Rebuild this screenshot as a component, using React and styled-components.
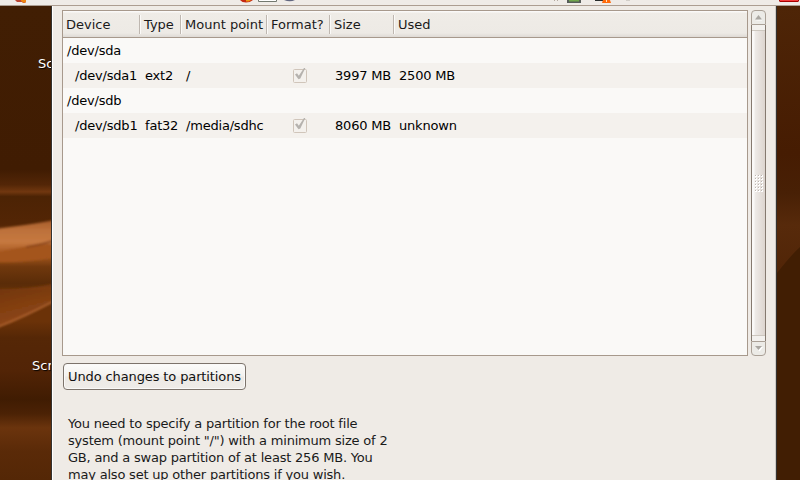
import React from "react";
import styled, { createGlobalStyle } from "styled-components";

const GlobalStyle = createGlobalStyle`
  * { box-sizing: border-box; }
  body {
    margin: 0;
    overflow: hidden;
    font: 13px/17px "DejaVu Sans", sans-serif;
    color: #1a1a1a;
    background: #411e03;
  }
`;

const Screen = styled.div`
  width: 800px;
  height: 480px;
  overflow: hidden;
  display: flex;
  flex-direction: column;
`;

const TopPanel = styled.header`
  height: 6px;
  flex: none;
  background: #efebe7;
  border-bottom: 1px solid #ac9d91;
  svg { display: block; }
`;

const Desktop = styled.main`
  flex: 1;
  min-height: 0;
  display: grid;
  grid-template-columns: 51px 726px 23px;
`;

const Wallpaper = styled.div`
  position: relative;
  overflow: hidden;
  svg { display: block; }
`;

const IconLabel = styled.span`
  position: absolute;
  left: ${(p) => p.$x}px;
  top: ${(p) => p.$y}px;
  color: #fff;
  text-shadow: 1px 1px 1px #000;
`;

const Window = styled.section`
  background: #efebe6;
  border-left: 1px solid #343230;
  border-right: 1px solid #343230;
  box-shadow: inset 1px 0 #fff, inset -1px 0 #cfcac4;
  padding: 4px 9px 0 10px;
  overflow: hidden;
`;

const ScrollArea = styled.div`
  display: flex;
  gap: 3px;
  height: 346px;
`;

const Table = styled.div`
  width: 686px;
  border: 1px solid #a7998c;
  background: #faf9f7;
`;

const Line = styled.div`
  display: grid;
  grid-template-columns: 78px 41px 86px 63px 64px 1fr;
`;

const HeaderRow = styled(Line)`
  height: 27px;
  padding: 4px 0 3px;
  background: linear-gradient(#faf9f8 0 1px, #efece7 2px, #edeae5 22px, #dedad5 26px);
  border-bottom: 1px solid #a7998c;
`;

const HeaderCell = styled.div`
  height: 19px;
  padding: 1px 0 0 3px;
  white-space: nowrap;
  border-right: ${(p) => (p.$last ? "0" : "1px solid #fbfaf8")};
  box-shadow: ${(p) => (p.$last ? "none" : "inset -1px 0 #beb7b0")};
`;

const Row = styled(Line)`
  height: 25px;
  background: ${(p) => (p.$shaded ? "#f4f1ed" : "#faf9f7")};
  color: #000;
  letter-spacing: -0.2px;
`;

const Cell = styled.div`
  padding: 4px 0 0 ${(p) => (p.$child ? 12 : 4)}px;
  white-space: nowrap;
`;

const CheckCell = styled.div`
  padding: 3px 0 0 24px;
  svg { display: block; }
`;

const Scrollbar = styled.div`
  width: 15px;
  display: flex;
  flex-direction: column;
`;

const StepButton = styled.div`
  height: 15px;
  border: 1px solid #aaa096;
  border-radius: ${(p) => (p.$down ? "0 0 4px 4px" : "4px 4px 0 0")};
  background: #ecebe7;
  display: grid;
  place-items: center;
`;

const Track = styled.div`
  flex: 1;
  padding: 5px 0;
  border: solid #857a70;
  border-width: 0 1px;
  background: #f3f1ee;
`;

const Thumb = styled.div`
  height: 306px;
  padding: 2px 0 0 2px;
  border: solid #cdc7bf;
  border-width: 1px 0;
  background: linear-gradient(90deg, #faf9f8 0 2px, #eeebe8 3px, #ddd5cf);
  display: grid;
  place-items: center;
`;

const Button = styled.button`
  display: block;
  margin: 7px 0 0 1px;
  width: 183px;
  height: 27px;
  padding: 0 0 1px;
  border: 1px solid #7c736b;
  border-radius: 4px;
  background: linear-gradient(#fcfcfb, #f3f1ee 48%, #ece9e5 52%, #efece8);
  box-shadow: inset 0 0 0 1px #faf9f8;
  font: inherit;
  letter-spacing: -0.12px;
  color: #111;
  white-space: nowrap;
`;

const Notice = styled.p`
  margin: 25px 0 0 6px;
  letter-spacing: -0.2px;
  white-space: pre;
`;

function PanelIcons() {
  return (
    <svg width="800" height="5">
      <path d="M15 0h8l3 3h-3l-1-1h-5z" fill="#bd4632" />
      <path d="M21 0h5v2l-2 1-3-2z" fill="#ef8510" />
      <path d="M240 0h13q-3 2.500-7 2.500T240 0z" fill="#c42712" />
      <path d="M246 0h5l-2 1.500h-3z" fill="#ed9615" />
      <path d="M258.500 0v1.500h18V0" fill="#fff" stroke="#737970" />
      <path d="M284 0h11q-5 2.500-11 0z" fill="#626780" />
      <path d="M554 0h1v1h-1zm3 0h1v1h-1z" fill="#b5aaa0" />
      <path d="M567 0h14v3h-14z" fill="#565c59" />
      <path d="M569 0h10v1.500h-10z" fill="#70a64d" />
      <path d="M595 0h9v1h-9z" fill="#272b2b" />
      <path d="M603 0h7l1 3h-9z" fill="#ff6a0a" />
      <path d="M606 0h1v2h-1z" fill="#ffe1c0" />
      <path d="M626 0h4v1h-4z" fill="#d2cec8" />
      <path d="M779 0h20v1l-1 1h-18l-1-1z" fill="#a80000" />
      <path d="M780 0h18v1h-18z" fill="#f33b3b" />
    </svg>
  );
}

function LeftScene() {
  return (
    <svg width="51" height="474" viewBox="0 6 51 474">
      <defs>
        <linearGradient id="base" gradientUnits="userSpaceOnUse" x1="0" y1="6" x2="0" y2="480">
          <stop offset="0" stopColor="#411e03" />
          <stop offset=".345" stopColor="#401c02" />
          <stop offset=".377" stopColor="#532607" />
          <stop offset=".392" stopColor="#71370f" />
          <stop offset=".402" stopColor="#4c2304" />
          <stop offset=".46" stopColor="#532505" />
          <stop offset=".53" stopColor="#9c521b" />
          <stop offset=".55" stopColor="#70380d" />
          <stop offset=".585" stopColor="#5a2c08" />
          <stop offset=".62" stopColor="#6b3208" />
          <stop offset=".665" stopColor="#6b3208" />
          <stop offset=".70" stopColor="#552706" />
          <stop offset=".77" stopColor="#522406" />
          <stop offset=".83" stopColor="#401c02" />
          <stop offset=".86" stopColor="#4b2205" />
          <stop offset=".89" stopColor="#6b340d" />
          <stop offset=".94" stopColor="#5a2a08" />
          <stop offset="1" stopColor="#542706" />
        </linearGradient>
        <linearGradient id="ribbon" x1="0" y1="0" x2="0" y2="1">
          <stop offset="0" stopColor="#a65c2a" />
          <stop offset=".3" stopColor="#bd713b" />
          <stop offset=".65" stopColor="#c67940" />
          <stop offset="1" stopColor="#a4551d" />
        </linearGradient>
        <linearGradient id="fan" x1="0" y1="0" x2=".35" y2="1">
          <stop offset="0" stopColor="#713509" />
          <stop offset=".55" stopColor="#8a4315" />
          <stop offset="1" stopColor="#9e501d" />
        </linearGradient>
        <filter id="soft"><feGaussianBlur stdDeviation="1" /></filter>
      </defs>
      <path d="M0 0h51v480H0z" fill="url(#base)" />
      <g filter="url(#soft)">
        <path d="M-5 229Q23 226 56 220V244Q25 245-5 254z" fill="url(#ribbon)" />
        <path d="M-5 253Q22 246 56 244V257Q25 263-5 262z" fill="#a4551d" />
        <path d="M26 247Q43 244 56 240" fill="none" stroke="#89441a" strokeWidth="1.500" />
        <path d="M-5 290Q25 290 56 283V300Q25 318-5 329z" fill="url(#fan)" opacity=".75" />
        <path d="M-5 328Q26 316 56 300" fill="none" stroke="#b26633" strokeWidth="1.500" />
        <path d="M-5 290L56 288" stroke="#8d4716" opacity=".6" />
      </g>
    </svg>
  );
}

function RightScene() {
  return (
    <svg width="23" height="474" viewBox="777 6 23 474">
      <defs>
        <linearGradient id="right" gradientUnits="userSpaceOnUse" x1="0" y1="6" x2="0" y2="273">
          <stop offset="0" stopColor="#4e2507" />
          <stop offset=".55" stopColor="#461c02" />
          <stop offset=".7" stopColor="#482005" />
          <stop offset=".82" stopColor="#572a0b" />
          <stop offset="1" stopColor="#512507" />
        </linearGradient>
      </defs>
      <path d="M777 6h23v474h-23z" fill="#411e03" />
      <path d="M777 6h23v241q-8 7-23 26z" fill="url(#right)" />
    </svg>
  );
}

function CheckMark() {
  return (
    <svg width="15" height="17" viewBox="0 0 15 17">
      <rect x="1.500" y="3.500" width="13" height="13" rx="1" fill="#f4f1ed" stroke="#d0c5ba" />
      <path d="M3 8.500L5 7.300l1.800 2.500L12 2h1.300L8.300 12.500l-1.800.700z" fill="#b5b2ae" />
    </svg>
  );
}

function Arrow({ down }) {
  return (
    <svg width="9" height="7" viewBox="0 0 9 7">
      <path d={down ? "M2 2h7L5.500 6.500z" : "M1 6.500h7V5z"} fill="#fff" />
      <path d={down ? "M1 1h7L4.500 5z" : "M1 5.500h7L4.500 1z"} fill="#aaa7a2" />
    </svg>
  );
}

function Grip() {
  const dots = [];
  for (let row = 0; row < 6; row++) {
    for (let col = 0; col < 3; col++) dots.push([col * 3, row * 3]);
  }
  return (
    <svg width="9" height="18">
      {dots.map(([x, y]) => (
        <g key={`${x}-${y}`}>
          <path d={`M${x} ${y}h2v2h-2z`} fill="#fff" />
          <path d={`M${x} ${y}h1v1h-1z`} fill="#bcb5af" />
        </g>
      ))}
    </svg>
  );
}

const columns = ["Device", "Type", "Mount point", "Format?", "Size", "Used"];

const partitions = [
  { device: "/dev/sda" },
  { device: "/dev/sda1", type: "ext2", mount: "/", size: "3997 MB", used: "2500 MB" },
  { device: "/dev/sdb" },
  { device: "/dev/sdb1", type: "fat32", mount: "/media/sdhc", size: "8060 MB", used: "unknown" },
];

export default function App() {
  return (
    <>
      <GlobalStyle />
      <Screen>
        <TopPanel><PanelIcons /></TopPanel>
        <Desktop>
          <Wallpaper>
            <LeftScene />
            <IconLabel $x={38} $y={49}>Sc</IconLabel>
            <IconLabel $x={32} $y={351}>Scr</IconLabel>
          </Wallpaper>
          <Window>
            <ScrollArea>
              <Table>
                <HeaderRow>
                  {columns.map((name, i) => (
                    <HeaderCell key={name} $last={i === columns.length - 1}>{name}</HeaderCell>
                  ))}
                </HeaderRow>
                {partitions.map((p) => (
                  <Row key={p.device} $shaded={Boolean(p.type)}>
                    <Cell $child={Boolean(p.type)}>{p.device}</Cell>
                    {p.type && (
                      <>
                        <Cell>{p.type}</Cell>
                        <Cell>{p.mount}</Cell>
                        <CheckCell><CheckMark /></CheckCell>
                        <Cell>{p.size}</Cell>
                        <Cell>{p.used}</Cell>
                      </>
                    )}
                  </Row>
                ))}
              </Table>
              <Scrollbar>
                <StepButton><Arrow /></StepButton>
                <Track><Thumb><Grip /></Thumb></Track>
                <StepButton $down><Arrow down /></StepButton>
              </Scrollbar>
            </ScrollArea>
            <Button>Undo changes to partitions</Button>
            <Notice>{`You need to specify a partition for the root file
system (mount point "/") with a minimum size of 2
GB, and a swap partition of at least 256 MB. You
may also set up other partitions if you wish.`}</Notice>
          </Window>
          <Wallpaper><RightScene /></Wallpaper>
        </Desktop>
      </Screen>
    </>
  );
}
